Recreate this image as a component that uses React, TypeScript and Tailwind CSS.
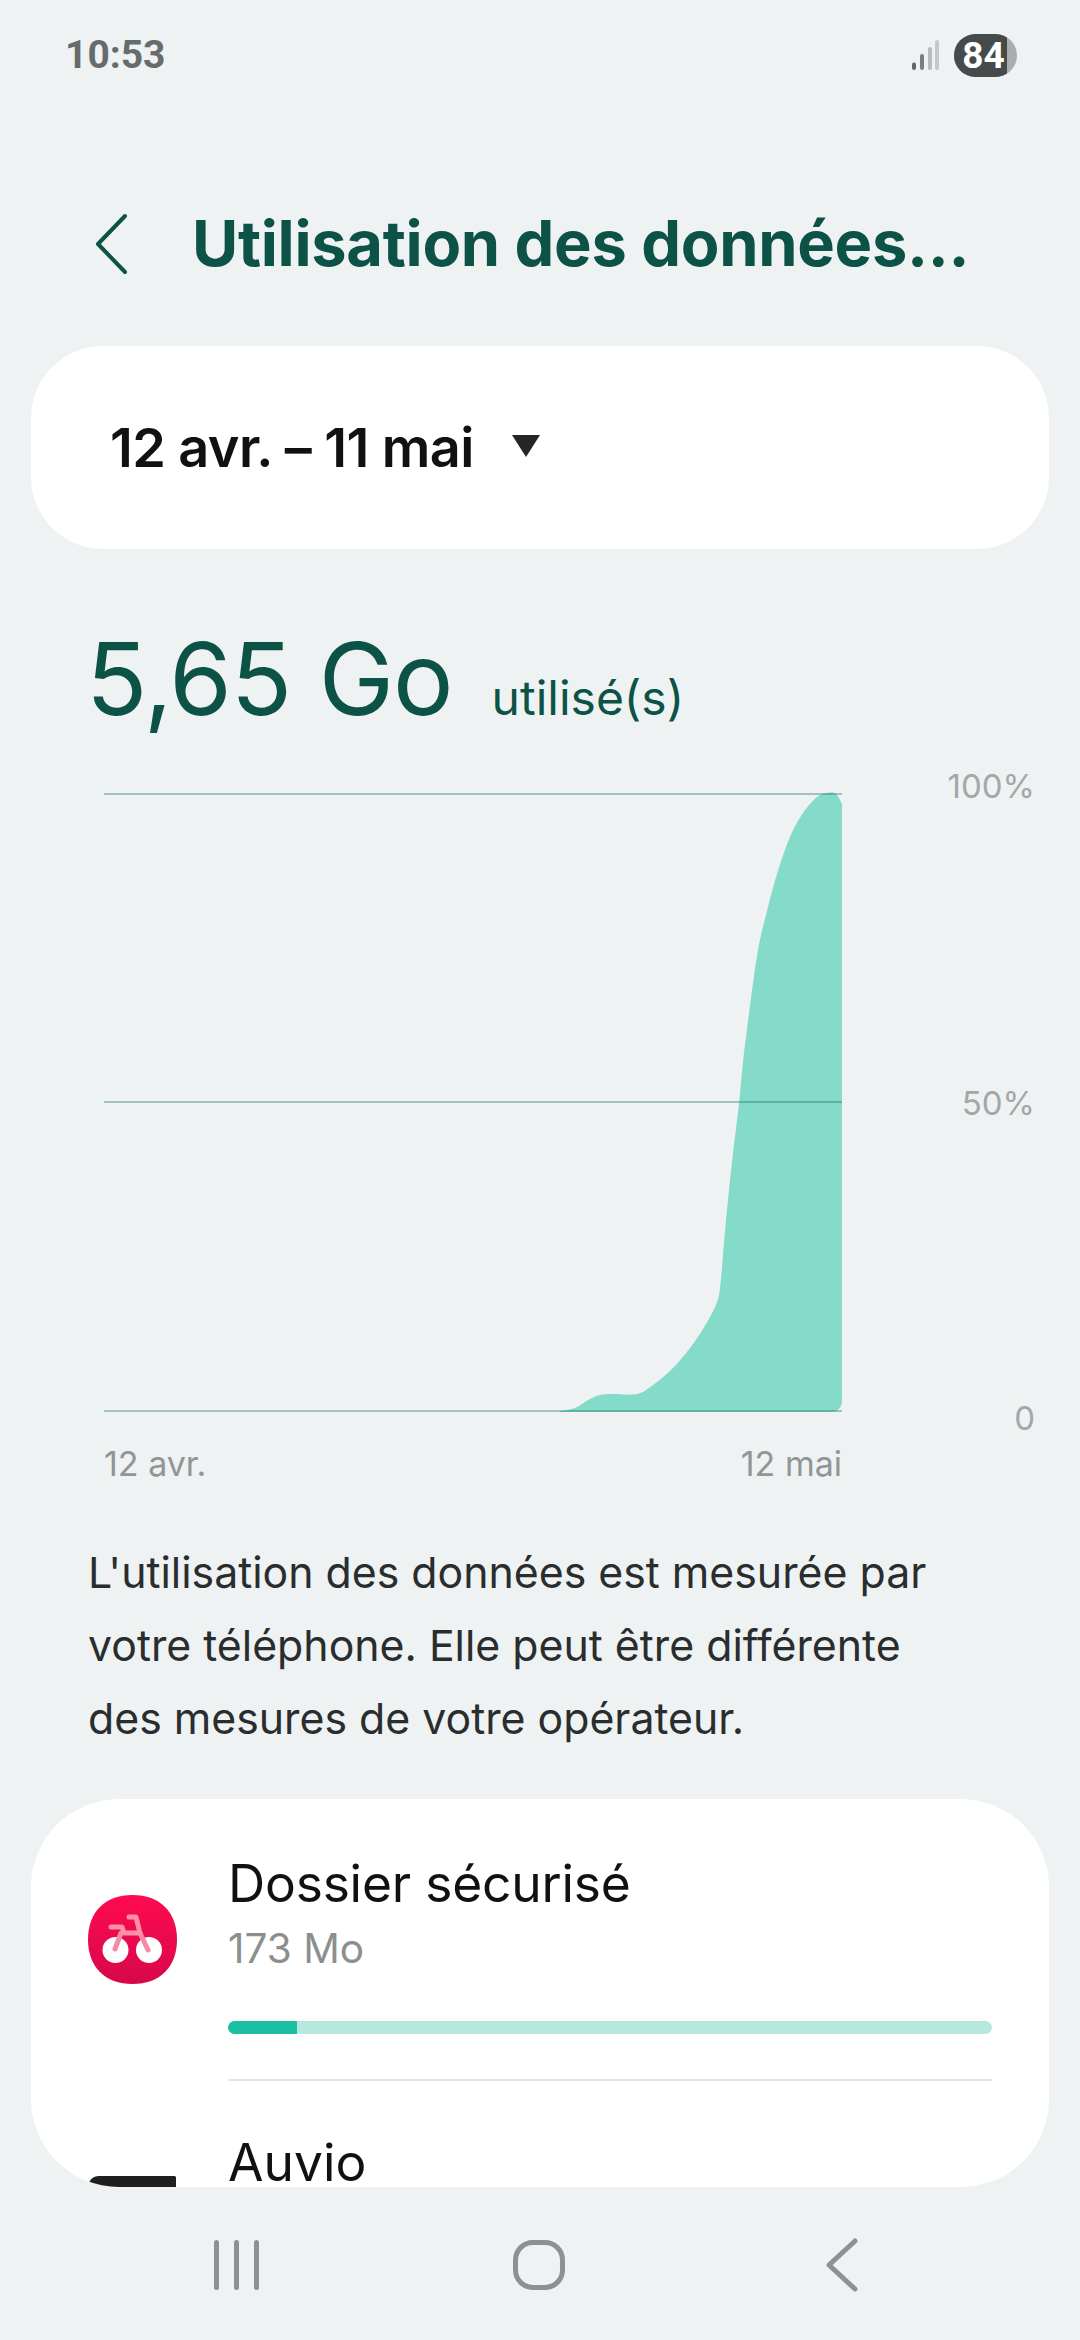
const pts: [number, number][] = [
  [560, 1409], [567, 1408], [577, 1405], [590, 1397], [600, 1393], [612, 1392], [637, 1392], [653, 1383], [673, 1366],
  [690, 1346], [703, 1327], [715, 1305], [720, 1286], [725, 1229], [732, 1160], [739, 1102], [743, 1060],
  [750, 1004], [758, 948], [767, 909], [777, 872], [790, 835], [803, 811], [817, 795], [827, 791], [836, 792], [842, 802],
];

function smoothPath(p: [number, number][]) {
  let d = `M${p[0][0] - 104} ${p[0][1] - 780}`;
  for (let i = 0; i < p.length - 1; i++) {
    const a = p[Math.max(i - 1, 0)];
    const b = p[i];
    const c = p[i + 1];
    const e = p[Math.min(i + 2, p.length - 1)];
    const c1x = b[0] + (c[0] - a[0]) / 6 - 104;
    const c1y = b[1] + (c[1] - a[1]) / 6 - 780;
    const c2x = c[0] - (e[0] - b[0]) / 6 - 104;
    const c2y = c[1] - (e[1] - b[1]) / 6 - 780;
    d += ` C${c1x} ${c1y} ${c2x} ${c2y} ${c[0] - 104} ${c[1] - 780}`;
  }
  d += " L738 618 Q738 630 726 630 L456 630 Z";
  return d;
}

function Chart() {
  return (
    <svg width="740" height="640" viewBox="0 0 740 640" className="block">
      <path d={smoothPath(pts)} fill="#85dbc9" />
      <line x1="0" x2="738" y1="12" y2="12" stroke="#0f6b60" strokeOpacity="0.35" strokeWidth="2" />
      <line x1="0" x2="738" y1="320" y2="320" stroke="#0f6b60" strokeOpacity="0.35" strokeWidth="2" />
      <line x1="0" x2="738" y1="629" y2="629" stroke="#0f6b60" strokeOpacity="0.35" strokeWidth="2" />
    </svg>
  );
}

function BikeIcon() {
  return (
    <svg width="89" height="89" viewBox="0 0 89 89" className="block shrink-0">
      <defs>
        <linearGradient id="red" x1="0" y1="0" x2="0" y2="1">
          <stop offset="0" stopColor="#ff0a50" />
          <stop offset="1" stopColor="#d6084a" />
        </linearGradient>
      </defs>
      <path d="M44.5 0C72 0 89 17 89 44.5S72 89 44.5 89 0 72 0 44.5 17 0 44.5 0Z" fill="url(#red)" />
      <circle cx="27.5" cy="55" r="13" fill="#fff" />
      <circle cx="61" cy="55" r="13" fill="#fff" />
      <g fill="none" strokeLinecap="round" strokeLinejoin="round" strokeWidth="5">
        <path d="M33 38 27 54M52 38 60 55" stroke="#f58aa6" />
        <path d="M23 32H34L36 38H52L48 22H41" stroke="#ff8fab" />
      </g>
    </svg>
  );
}

export default function App() {
  return (
    <div className="w-[1080px] h-[2340px] bg-[#eff2f3] flex flex-col overflow-hidden font-['Inter','Noto_Sans',sans-serif]">
      {/* status bar */}
      <div className="h-[110px] pl-[65px] pr-[63px] flex items-center justify-between shrink-0">
        <span className="text-[39px] leading-none font-bold text-[#666b6c] font-['Roboto',sans-serif]">10:53</span>
        <div className="flex items-center gap-[15px]">
          <svg width="28" height="30" viewBox="0 0 28 30" className="block">
            <g strokeWidth="4" strokeLinecap="round" fill="none">
              <path d="M3 24.5V28" stroke="#5f6465" />
              <path d="M11 16V28" stroke="#7a7e7f" />
              <path d="M19 9V28" stroke="#b9bcbd" />
              <path d="M26 2V28" stroke="#c5c8c9" />
            </g>
          </svg>
          <div className="relative w-[63px] h-[43px] rounded-full bg-[#a9adae] overflow-hidden flex items-center">
            <div className="absolute left-0 top-0 bottom-0 w-[53px] bg-[#464a4b]" />
            <span className="relative w-full pr-[4px] text-center text-[37px] leading-none font-bold text-white font-['Roboto',sans-serif]">84</span>
          </div>
        </div>
      </div>

      {/* header */}
      <div className="h-[236px] shrink-0 pb-[57px] pl-[93px] flex items-end">
        <div className="flex items-center h-[90px]">
          <svg width="36" height="62" viewBox="0 0 36 62" className="block shrink-0">
            <path d="M32 3 5 31 32 59" fill="none" stroke="#0c5246" strokeWidth="4" strokeLinecap="round" strokeLinejoin="round" />
          </svg>
          <h1 className="ml-[63px] text-[63.2px] leading-none font-bold tracking-[-0.3px] text-[#0c5246] whitespace-nowrap">Utilisation des données...</h1>
        </div>
      </div>

      {/* date card */}
      <div className="mx-[31px] h-[203px] shrink-0 bg-white rounded-[72px] pl-[79px] flex items-center gap-[37px]">
        <span className="text-[54px] leading-none font-semibold tracking-[-0.6px] text-[#111]">12 avr. – 11 mai</span>
        <svg width="30" height="24" viewBox="0 0 30 24" className="block mt-[-4px]">
          <path d="M1 1H29L15 23Z" fill="#252525" />
        </svg>
      </div>

      {/* total */}
      <div className="mt-[69px] h-[120px] shrink-0 pl-[86px] flex items-baseline text-[#0c5246]">
        <span className="text-[101px] leading-[120px] tracking-[-1px]">5,65 Go</span>
        <span className="ml-[39px] text-[48px] leading-none">utilisé(s)</span>
      </div>

      {/* chart */}
      <div className="mt-[44px] pl-[104px] pr-[45px] flex justify-between shrink-0">
        <div className="w-[740px]">
          <Chart />
          <div className="mt-[22px] flex justify-between w-[738px] text-[34px] leading-[40px] text-[#919596]">
            <span>12 avr.</span>
            <span>12 mai</span>
          </div>
        </div>
        <div className="h-[672px] mt-[-16px] flex flex-col justify-between items-end text-[33px] leading-[40px] text-[#a3a7a8]">
          <span>100%</span>
          <span className="mt-[2px]">50%</span>
          <span>0</span>
        </div>
      </div>

      {/* paragraph */}
      <p className="mt-[52px] pl-[88px] pr-[40px] text-[42.8px] leading-[73px] text-[#2a2d2e] shrink-0">
        L'utilisation des données est mesurée par<br />
        votre téléphone. Elle peut être différente<br />
        des mesures de votre opérateur.
      </p>

      {/* list card */}
      <div className="mt-[44px] mx-[31px] h-[388px] shrink-0 bg-white rounded-[88px] overflow-hidden pl-[57px] pr-[57px] flex flex-col">
        <div className="flex items-start">
          <div className="w-[140px] pt-[96px] shrink-0"><BikeIcon /></div>
          <div className="flex-1 pt-[53px]">
            <div className="text-[51.5px] leading-[62px] text-[#111] -tracking-[0.2px]">Dossier sécurisé</div>
            <div className="mt-[11px] text-[40.5px] leading-[48px] text-[#8b8f90]">173 Mo</div>
            <div className="mt-[48px] h-[13px] rounded-full bg-[#b7e8df] overflow-hidden">
              <div className="h-full w-[69px] bg-[#1dbfa2]" />
            </div>
            <div className="mt-[45px] h-[2px] bg-[#e3e5e6]" />
            <div className="mt-[50px] text-[51.5px] leading-[62px] text-[#111]">Auvio</div>
          </div>
        </div>
        <div className="mt-[-17px] w-[88px] h-[89px] bg-[#1f1f1f] rounded-tl-[44px] rounded-tr-[6px]" />
      </div>

      {/* nav bar */}
      <div className="flex-1 relative flex items-start">
        <div className="mt-[53px] ml-[214px] flex gap-[15px] h-[50px]">
          <div className="w-[5px] h-full rounded-full bg-[#8c9191]" />
          <div className="w-[5px] h-full rounded-full bg-[#8c9191]" />
          <div className="w-[5px] h-full rounded-full bg-[#8c9191]" />
        </div>
        <div className="mt-[53px] ml-[254px] w-[52px] h-[50px] rounded-[20px] border-[5px] border-[#8c9191]" />
        <svg width="36" height="54" viewBox="0 0 36 54" className="block mt-[51px] ml-[258px]">
          <path d="M32 3 6 27 32 51" fill="none" stroke="#8c9191" strokeWidth="5" strokeLinecap="round" strokeLinejoin="round" />
        </svg>
      </div>
    </div>
  );
}
